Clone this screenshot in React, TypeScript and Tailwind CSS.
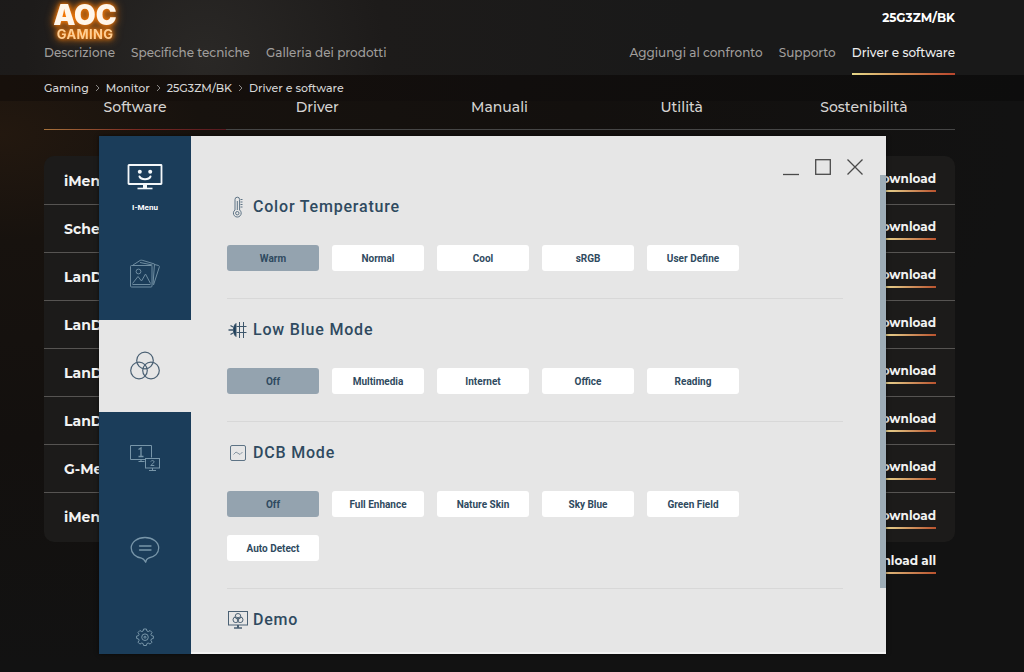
import type { ReactNode } from "react";

const PAGE_FONT = "font-['Montserrat','Inter',sans-serif]";
const APP_FONT = "font-['Roboto',sans-serif]";

const productLinks = ["Descrizione", "Specifiche tecniche", "Galleria dei prodotti"];
const supportLinks = ["Aggiungi al confronto", "Supporto", "Driver e software"];
const crumbs = ["Gaming", "Monitor", "25G3ZM/BK", "Driver e software"];
const tabs = ["Software", "Driver", "Manuali", "Utilità", "Sostenibilità"];
const files = ["iMenu", "Sche", "LanD", "LanD", "LanD", "LanD", "G-Me", "iMenu"];

function Logo() {
  return (
    <a href="#home" aria-label="AOC Gaming" className="block">
      <svg
        width="72"
        height="42"
        viewBox="0 0 72 42"
        className="overflow-visible font-['Inter',sans-serif] drop-shadow-[0_0_4px_#e8780f]"
        fill="#fff6ea"
      >
        <g className="drop-shadow-[0_0_2px_#ff7a00]">
          <text x="41" y="24" textAnchor="middle" fontSize="28" fontWeight="900">
            AOC
          </text>
          <text x="41" y="38" textAnchor="middle" fontSize="13" fontWeight="700" fill="#ffcf94" className="tracking-wide">
            GAMING
          </text>
        </g>
      </svg>
    </a>
  );
}

function Header() {
  return (
    <header className="flex h-[75px] items-end justify-between bg-[radial-gradient(circle_at_20%_75%,#2a2826_0%,#1d1b1a_22%,#191919_60%)] pr-[69px] pl-11 text-[12px] leading-5 font-medium">
      <div className="pb-3">
        <Logo />
        <nav className="flex gap-4 text-[#a09e9c]">
          {productLinks.map((label) => (
            <a key={label} href="#product">
              {label}
            </a>
          ))}
        </nav>
      </div>
      <div className="flex flex-col items-end gap-[15px]">
        <strong className="font-bold text-white">25G3ZM/BK</strong>
        <nav className="flex gap-4 text-[#a09e9c]">
          {supportLinks.map((label, i) => (
            <a
              key={label}
              href="#support"
              className={
                i === 2
                  ? "border-b-2 pb-[10px] text-[#eeeeee] [border-image:linear-gradient(90deg,#e6d98a,#d08a50,#b8442c)_1]"
                  : "pb-3"
              }
            >
              {label}
            </a>
          ))}
        </nav>
      </div>
    </header>
  );
}

function Breadcrumb() {
  return (
    <nav
      aria-label="Breadcrumb"
      className="flex h-[26px] items-center gap-1.5 bg-linear-to-r from-[#17100b] via-[#110e0d] to-[#0d0d0d] pl-11 text-[11px] font-medium text-[#d6d6d6]"
    >
      {crumbs.map((label, i) => (
        <span key={label} className="flex items-center gap-1.5">
          {i > 0 && (
            <svg width="5" height="8" viewBox="0 0 5 8" fill="none" stroke="#8a8886">
              <path d="M1 1l3 3-3 3" />
            </svg>
          )}
          <a href="#crumb">{label}</a>
        </span>
      ))}
    </nav>
  );
}

function Downloads() {
  const link =
    "border-b-2 pb-px leading-5 [border-image:linear-gradient(90deg,#f0e69a,#e0c080_35%,#b8502c)_1]";
  return (
    <section className="pr-[69px] pl-11">
      <nav className="grid grid-cols-5 border-b border-[#464646] text-center text-[14px] font-medium text-[#d6d4d2]">
        {tabs.map((label, i) => (
          <a
            key={label}
            href="#tab"
            className={
              i === 0
                ? "-mb-px border-b pb-4 leading-3 [border-image:linear-gradient(90deg,#a8743c,#7a2a22,#561a20)_1]"
                : "pb-4 leading-3"
            }
          >
            {label}
          </a>
        ))}
      </nav>
      <ul className="mt-[26px] rounded-[10px] bg-[#1c1b1a] py-px font-bold text-[#f2f2f2]">
        {files.map((name, i) => (
          <li
            key={i}
            className={
              i < files.length - 1
                ? "flex h-12 items-center justify-between border-b border-[#565452] pr-[19px] pl-5"
                : "flex h-12 items-center justify-between pr-[19px] pl-5"
            }
          >
            <span className="text-[14px] leading-5">{name}</span>
            <a href="#download" className={`${link} text-[12px]`}>
              Download
            </a>
          </li>
        ))}
      </ul>
      <div className="mt-[9px] flex justify-end pr-[19px] text-[12px] font-bold text-[#f2f2f2]">
        <a href="#download-all" className={link}>
          Download all
        </a>
      </div>
    </section>
  );
}

/* Icons of the settings window */

function MonitorFaceIcon() {
  return (
    <svg width="36" height="26" viewBox="0 0 36 26" fill="none" stroke="#f4f8fa" strokeWidth="1.8">
      <rect x="1.5" y="1" width="33" height="19" rx="0.5" />
      <path d="M18 20v4" strokeWidth="4" />
      <path d="M10.5 24.5h15" strokeWidth="1.6" />
      <path d="M12.5 12.5c1.5 3.500 9.500 3.500 11 0" strokeWidth="2" strokeLinecap="round" />
      <circle cx="12.800" cy="7.800" r="2" fill="#f4f8fa" stroke="none" />
      <circle cx="23.200" cy="7.800" r="2" fill="#f4f8fa" stroke="none" />
    </svg>
  );
}

function PhotosIcon() {
  return (
    <svg width="32" height="30" viewBox="0 0 32 30" fill="none" stroke="#6f8da1" strokeLinejoin="round">
      <rect x="1.500" y="6.500" width="21.500" height="21.500" rx="1" />
      <path d="M3.500 24.500l5.500-7 3.500 4.500 4-7 5 9.500" />
      <circle cx="9.500" cy="12.500" r="2.400" />
      <path d="M3.500 25.500h18" />
      <path d="M4 6l7-4.500c1-.5 2-.3 3 0l11.500 3.500-1.500 20.500" />
      <path d="M11 3.500l12.500 2.500" />
      <path d="M25.500 5.500l4 1c.8.3 1 .8.8 1.600L24.500 26" />
    </svg>
  );
}

function CirclesIcon() {
  return (
    <svg width="32" height="30" viewBox="0 0 32 30" fill="none" stroke="#4b6174" strokeWidth="1.200">
      <circle cx="16" cy="9.500" r="8.300" />
      <circle cx="10" cy="19.500" r="8.300" />
      <circle cx="22" cy="19.500" r="8.300" />
    </svg>
  );
}

function DualScreenIcon() {
  return (
    <svg width="32" height="28" viewBox="0 0 32 28" fill="none" stroke="#7896a9">
      <path d="M16 15.500H1.500v-14h21v12" />
      <path d="M9.500 17.500h6M12 15.500v2" />
      <rect x="16.500" y="14.500" width="14" height="9.500" />
      <path d="M20 26.500h7M23.500 24v2.500" />
      <path d="M9.500 5.500l2.500-1.500v8.500M9.500 12.500h5" strokeWidth="1.300" />
      <path d="M21.800 17.500c.4-1.300 3.300-1.300 3.300.3 0 1.200-2.200 2-3.300 3.700h3.500" />
    </svg>
  );
}

function SpeechIcon() {
  return (
    <svg width="30" height="28" viewBox="0 0 30 28" fill="none" stroke="#7896a9" strokeWidth="1.300" strokeLinecap="round" strokeLinejoin="round">
      <path d="M15 1.500C7.500 1.500 1.200 6 1.200 12c0 5.200 4.500 9.300 10.300 10.200 1.800.4 3 1.800 4.200 4 .2-2 1-3.400 3-4.200 6-1.200 10-5 10-10C28.700 6 22.500 1.500 15 1.500z" />
      <path d="M9.500 10h11.500M9.500 14h11.500" />
    </svg>
  );
}

function GearIcon() {
  return (
    <svg width="18" height="18" viewBox="0 0 18 18" fill="none" stroke="#7896a9" strokeLinejoin="round">
      <path d="M7.600 1h2.800l.5 2 1.300.6 1.900-1.100 1.900 2-1.100 1.800.5 1.300 2 .5v2.300l-2 .6-.5 1.400 1.100 1.800-1.900 1.900-1.900-1.100-1.300.6-.5 1.900H7.600l-.5-1.900-1.300-.6-1.900 1.100-1.900-1.900 1.100-1.800-.5-1.400-2-.6V8.100l2-.5.5-1.300L2 4.500l1.900-2 1.900 1.100L7.100 3z" />
      <circle cx="9" cy="9.200" r="3.300" />
      <circle cx="9" cy="9.200" r="1" />
    </svg>
  );
}

function ThermometerIcon() {
  return (
    <svg width="22" height="22" viewBox="0 0 22 22" fill="none" stroke="#5d7385">
      <path d="M8 14V3.500a2.300 2.300 0 0 1 4.600 0V14a3.900 3.900 0 1 1-4.600 0z" />
      <path d="M10.300 5v9" />
      <circle cx="10.300" cy="17.200" r="1.700" />
      <path d="M13.500 3.500h2M13.500 6h2M13.500 8.500h2M13.500 11h2" />
    </svg>
  );
}

function LowBlueIcon() {
  return (
    <svg width="22" height="20" viewBox="0 0 22 20" fill="none" stroke="#3d566b">
      <path d="M9 3.500C5.500 6 5.500 14 9 16.500z" fill="#1b3d5a" />
      <path d="M1.500 10H6M3.500 5.500L6 7M3.500 14.500L6 13" strokeWidth="1.300" />
      <path d="M12.500 2v16M16.500 2v16M9.500 6.500h10M9.500 12.500h10" />
    </svg>
  );
}

function WaveIcon() {
  return (
    <svg width="22" height="20" viewBox="0 0 22 20" fill="none" stroke="#5d7385">
      <rect x="3.500" y="2.500" width="15" height="15" rx="1.500" />
      <path d="M6.500 11.500l2.500-2.500 4 2.500 2.500-2.500" stroke="#8796a2" />
    </svg>
  );
}

function DemoIcon() {
  return (
    <svg width="22" height="20" viewBox="0 0 22 20" fill="none" stroke="#4b6174">
      <rect x="1.500" y="1.500" width="19" height="13.500" />
      <path d="M7 18h8" strokeWidth="1.500" />
      <path d="M11 15v3" strokeWidth="2" />
      <circle cx="11" cy="6.300" r="2.800" />
      <circle cx="8.800" cy="9.800" r="2.800" />
      <circle cx="13.200" cy="9.800" r="2.800" />
    </svg>
  );
}

type Group = { title: string; icon: ReactNode; options: string[] };

const groups: Group[] = [
  {
    title: "Color Temperature",
    icon: <ThermometerIcon />,
    options: ["Warm", "Normal", "Cool", "sRGB", "User Define"],
  },
  {
    title: "Low Blue Mode",
    icon: <LowBlueIcon />,
    options: ["Off", "Multimedia", "Internet", "Office", "Reading"],
  },
  {
    title: "DCB Mode",
    icon: <WaveIcon />,
    options: ["Off", "Full Enhance", "Nature Skin", "Sky Blue", "Green Field", "Auto Detect"],
  },
  { title: "Demo", icon: <DemoIcon />, options: [] },
];

function Sidebar() {
  const item = "flex h-[92px] w-full items-center justify-center";
  return (
    <nav aria-label="Sections" className="flex w-[92px] shrink-0 flex-col bg-[#1b3d5a]">
      <button className="flex h-[92px] w-full flex-col items-center justify-end gap-3 pb-[14px] text-[8px] leading-3 font-bold text-white">
        <MonitorFaceIcon />
        I-Menu
      </button>
      <button aria-label="Photos" className={item}>
        <PhotosIcon />
      </button>
      <button aria-label="Colors" className={`${item} bg-[#e6e6e6]`}>
        <CirclesIcon />
      </button>
      <button aria-label="Screens" className={item}>
        <DualScreenIcon />
      </button>
      <button aria-label="Messages" className={item}>
        <SpeechIcon />
      </button>
      <button aria-label="Settings" className="flex flex-1 items-end justify-center pb-2">
        <GearIcon />
      </button>
    </nav>
  );
}

function WindowControls() {
  return (
    <div className="flex justify-end gap-4 pt-[22px] pr-[23px]">
      <button aria-label="Minimize">
        <svg width="16" height="18" viewBox="0 0 16 18" stroke="#4a4a4a" strokeWidth="1.300">
          <path d="M0 16.500h16" />
        </svg>
      </button>
      <button aria-label="Maximize">
        <svg width="16" height="18" viewBox="0 0 16 18" fill="none" stroke="#4a4a4a" strokeWidth="1.300">
          <rect x="0.700" y="1.700" width="14.600" height="14.600" />
        </svg>
      </button>
      <button aria-label="Close">
        <svg width="16" height="18" viewBox="0 0 16 18" stroke="#4a4a4a" strokeWidth="1.300">
          <path d="M.5 1.500l15 15M15.500 1.500l-15 15" />
        </svg>
      </button>
    </div>
  );
}

function SettingsWindow() {
  return (
    <div
      role="dialog"
      aria-label="I-Menu"
      className={`absolute top-[136px] right-[138px] left-[99px] flex bg-[#e6e6e6] text-[#2f4a60] shadow-[0_0_4px_rgba(0,0,0,0.6)] ${APP_FONT}`}
    >
      <Sidebar />
      <div className="flex-1 border-b-2 border-[#f1f1f1] pb-[20px]">
        <WindowControls />
        <div className="pt-[19px] pr-[43px] pl-9">
          {groups.map(({ title, icon, options }) => (
            <section
              key={title}
              className="mb-[19px] border-b border-[#d8d8d8] pb-[27px] last:mb-0 last:border-0 last:pb-0"
            >
              <h2 className="flex h-6 items-center gap-1 text-[16px] font-medium tracking-wider">
                {icon}
                {title}
              </h2>
              {options.length > 0 && (
                <div className="mt-[26px] flex flex-wrap gap-x-[13px] gap-y-[18px]">
                  {options.map((label, i) => (
                    <button
                      key={label}
                      className={
                        i === 0
                          ? "h-[26px] w-[92px] rounded-[3px] bg-[#94a3af] text-[10px] font-bold"
                          : "h-[26px] w-[92px] rounded-[3px] bg-white text-[10px] font-bold"
                      }
                    >
                      {label}
                    </button>
                  ))}
                </div>
              )}
            </section>
          ))}
        </div>
      </div>
      <div className="absolute top-[39px] right-0 h-[413px] w-[6px] bg-[#9eadb7]" />
    </div>
  );
}

export default function App() {
  return (
    <main
      className={`relative min-h-screen overflow-hidden bg-[#121212] bg-[radial-gradient(ellipse_at_0%_20%,#23180f_0%,#17120e_14%,#13100e_40%,#121212_70%)] ${PAGE_FONT}`}
    >
      <Header />
      <Breadcrumb />
      <Downloads />
      <SettingsWindow />
    </main>
  );
}
